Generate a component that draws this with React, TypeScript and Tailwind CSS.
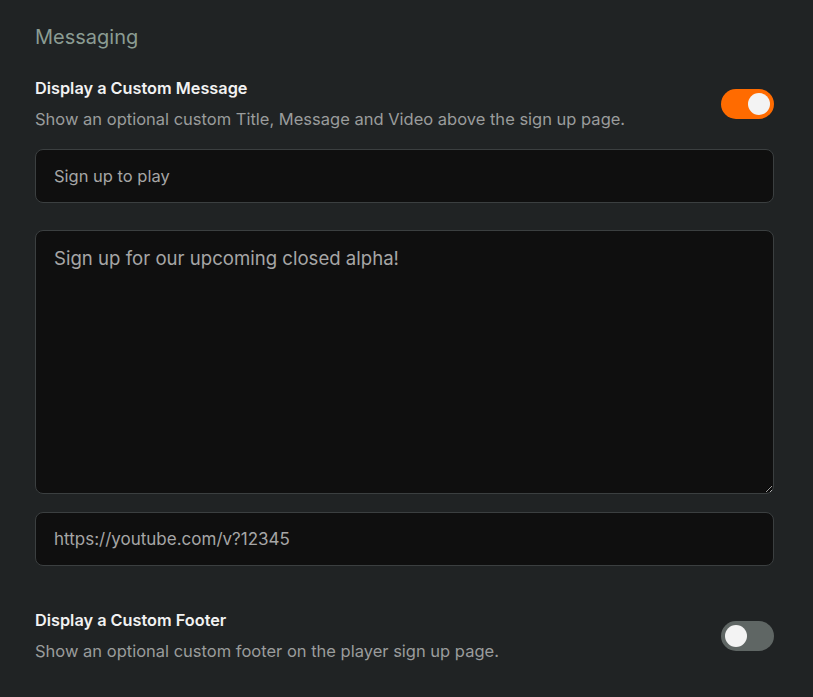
import { useState } from 'react';

function Toggle({ on, onChange }: { on: boolean; onChange: () => void }) {
  return (
    <button
      type="button"
      onClick={onChange}
      className={`relative h-[30px] w-[53px] shrink-0 rounded-full transition-colors ${
        on ? 'bg-[#ff6b00]' : 'bg-[#5f6664]'
      }`}
    >
      <span
        className={`absolute top-[4px] h-[22px] w-[22px] rounded-full bg-[#f3f3f3] transition-all ${
          on ? 'left-[27px]' : 'left-[4px]'
        }`}
      />
    </button>
  );
}

function SettingRow({
  title,
  desc,
  on,
  onChange,
}: {
  title: string;
  desc: string;
  on: boolean;
  onChange: () => void;
}) {
  return (
    <div className="flex items-center justify-between">
      <div>
        <div className="text-[16.3px] font-semibold leading-[22px] text-[#f2f2f2]">{title}</div>
        <div className="mt-[9px] text-[16.5px] leading-[22px] text-[#9a9c9c]">{desc}</div>
      </div>
      <Toggle on={on} onChange={onChange} />
    </div>
  );
}

export default function App() {
  const [message, setMessage] = useState(true);
  const [footer, setFooter] = useState(false);

  return (
    <div
      className="min-h-[697px] w-full bg-[#202324] px-[35px] pt-[24px]"
      style={{ fontFamily: "Inter, 'Noto Sans', sans-serif" }}
    >
      <h2 className="text-[20px] leading-[26px] text-[#8b9c93]">Messaging</h2>

      <div className="mt-[27px] mr-[4px]">
        <SettingRow
          title="Display a Custom Message"
          desc="Show an optional custom Title, Message and Video above the sign up page."
          on={message}
          onChange={() => setMessage(!message)}
        />
      </div>

      <div className="mt-[19px] mr-[4px] flex flex-col">
        <input
          defaultValue="Sign up to play"
          className="h-[54px] rounded-[8px] border border-[#3b3f40] bg-[#0f0f0f] px-[18px] text-[16.5px] text-[#a6a6a6] outline-none"
        />
        <textarea
          defaultValue="Sign up for our upcoming closed alpha!"
          className="mt-[27px] h-[264px] resize-y rounded-[8px] border border-[#3b3f40] bg-[#0f0f0f] px-[18px] py-[14px] text-[18.6px] leading-[26px] text-[#a6a6a6] outline-none"
        />
        <input
          defaultValue="https://youtube.com/v?12345"
          className="mt-[18px] h-[54px] rounded-[8px] border border-[#3b3f40] bg-[#0f0f0f] px-[18px] text-[17px] text-[#a6a6a6] outline-none"
        />
      </div>

      <div className="mt-[43px] mr-[4px]">
        <SettingRow
          title="Display a Custom Footer"
          desc="Show an optional custom footer on the player sign up page."
          on={footer}
          onChange={() => setFooter(!footer)}
        />
      </div>
    </div>
  );
}
